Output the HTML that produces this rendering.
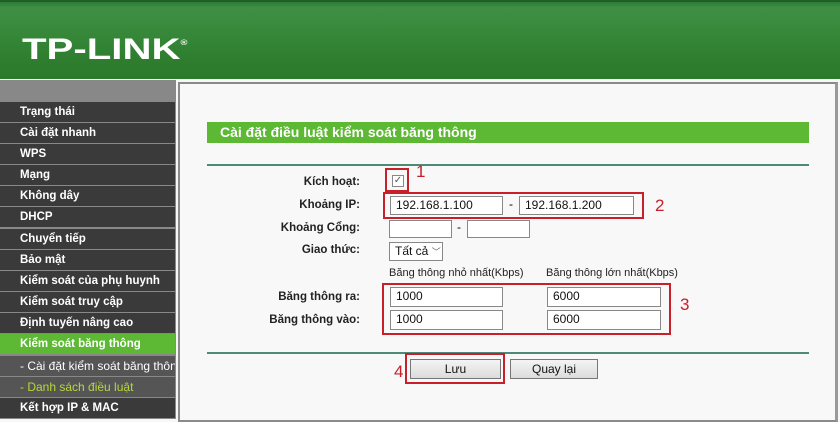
<!DOCTYPE html><html><head><meta charset="utf-8"><style>
*{margin:0;padding:0;box-sizing:border-box}
body{width:840px;height:419px;overflow:hidden;background:#f7f7f7;font-family:"Liberation Sans",Arial,sans-serif;position:relative}
.hdr{position:absolute;left:0;top:0;width:840px;height:79px;background:linear-gradient(#2d7a35 0,#3f8f45 6px,#3a8c3e 20px,#2e7d2e 60px,#2a7a2a 79px);border-top:2px solid #1f5f25}
.logo{position:absolute;left:22px;top:31px;color:#fff;font-weight:bold;font-size:30px;transform:scaleX(1.34);transform-origin:left}
.side{position:absolute;left:0;top:80px;width:176px;height:339px;background:#888}
.side div{position:absolute;left:0;width:175px;height:20px;background:#3a3a3a;color:#fff;font-size:11.5px;font-weight:bold;padding-left:20px;line-height:21px;white-space:nowrap;overflow:hidden}
.main{position:absolute;left:178px;top:82px;width:660px;height:340px;background:#f8f8f8;border:2px solid #8a8a8a;border-right:3px solid #999}
.abs{position:absolute}
.lbl{position:absolute;right:480px;font-size:11.5px;font-weight:bold;color:#222;text-align:right;white-space:nowrap}
.in{position:absolute;background:#fff;border:1px solid #888;font-size:12px;padding-left:5px;line-height:17px;color:#111}
.red{position:absolute;border:2px solid #c8202a}
.num{position:absolute;color:#c8202a;font-size:17px}
.btn{position:absolute;background:linear-gradient(#f4f4f4,#dcdcdc);border:1px solid #777;font-size:12px;text-align:center;line-height:18px;color:#111}
</style></head><body>
<div class="hdr"><div class="logo">TP-LINK<sup style="font-size:7px;vertical-align:14px">®</sup></div></div>
<div class="side">
<div style="top:22px">Trạng thái</div>
<div style="top:43px">Cài đặt nhanh</div>
<div style="top:64px">WPS</div>
<div style="top:85px">Mạng</div>
<div style="top:106px">Không dây</div>
<div style="top:127px">DHCP</div>
<div style="top:149px">Chuyển tiếp</div>
<div style="top:170px">Bảo mật</div>
<div style="top:191px">Kiểm soát của phụ huynh</div>
<div style="top:212px">Kiểm soát truy cập</div>
<div style="top:233px">Định tuyến nâng cao</div>
<div style="top:254px;background:#5db834">Kiểm soát băng thông</div>
<div style="top:276px;background:#555;padding-left:20px;font-weight:normal;font-size:12px">- Cài đặt kiểm soát băng thông</div>
<div style="top:297px;background:#555;color:#b6d83a;font-weight:normal;font-size:12px">- Danh sách điều luật</div>
<div style="top:318px">Kết hợp IP &amp; MAC</div>
</div>
<div class="main"></div>
<div class="abs" style="left:207px;top:122px;width:602px;height:21px;background:#5db834;color:#fff;font-weight:bold;font-size:14px;line-height:21px;padding-left:13px">Cài đặt điều luật kiểm soát băng thông</div>
<div class="abs" style="left:207px;top:164px;width:602px;height:2px;background:#4f8a78"></div>
<div class="abs" style="left:207px;top:352px;width:602px;height:2px;background:#4f8a78"></div>
<div class="lbl" style="top:176px">Kích hoạt:</div>
<div class="lbl" style="top:199px">Khoảng IP:</div>
<div class="lbl" style="top:222px">Khoảng Cổng:</div>
<div class="lbl" style="top:244px">Giao thức:</div>
<div class="lbl" style="top:291px">Băng thông ra:</div>
<div class="lbl" style="top:314px">Băng thông vào:</div>
<div class="abs" style="left:392px;top:175px;width:12px;height:12px;border:1px solid #888;background:#fff;font-size:10px;line-height:10px;text-align:center;color:#555">✓</div>
<div class="red" style="left:385px;top:168px;width:24px;height:24px"></div>
<div class="num" style="left:416px;top:162px">1</div>
<div class="in" style="left:390px;top:196px;width:113px;height:19px">192.168.1.100</div>
<div class="abs" style="left:509px;top:197px;font-size:12px">-</div>
<div class="in" style="left:519px;top:196px;width:115px;height:19px">192.168.1.200</div>
<div class="red" style="left:383px;top:192px;width:261px;height:27px"></div>
<div class="num" style="left:655px;top:196px">2</div>
<div class="in" style="left:389px;top:220px;width:63px;height:18px"></div>
<div class="abs" style="left:457px;top:220px;font-size:12px">-</div>
<div class="in" style="left:467px;top:220px;width:63px;height:18px"></div>
<div class="in" style="left:389px;top:242px;width:54px;height:19px">Tất cả <span style="font-size:9px;color:#666">﹀</span></div>
<div class="abs" style="left:389px;top:267px;font-size:11px;color:#222">Băng thông nhỏ nhất(Kbps)</div>
<div class="abs" style="left:546px;top:267px;font-size:11px;color:#222">Băng thông lớn nhất(Kbps)</div>
<div class="in" style="left:390px;top:287px;width:113px;height:20px">1000</div>
<div class="in" style="left:390px;top:310px;width:113px;height:20px">1000</div>
<div class="in" style="left:547px;top:287px;width:114px;height:20px">6000</div>
<div class="in" style="left:547px;top:310px;width:114px;height:20px">6000</div>
<div class="red" style="left:382px;top:283px;width:289px;height:52px"></div>
<div class="num" style="left:680px;top:295px">3</div>
<div class="btn" style="left:410px;top:359px;width:91px;height:20px">Lưu</div>
<div class="btn" style="left:510px;top:359px;width:88px;height:20px">Quay lại</div>
<div class="red" style="left:405px;top:353px;width:100px;height:31px"></div>
<div class="num" style="left:394px;top:362px">4</div>
</body></html>
